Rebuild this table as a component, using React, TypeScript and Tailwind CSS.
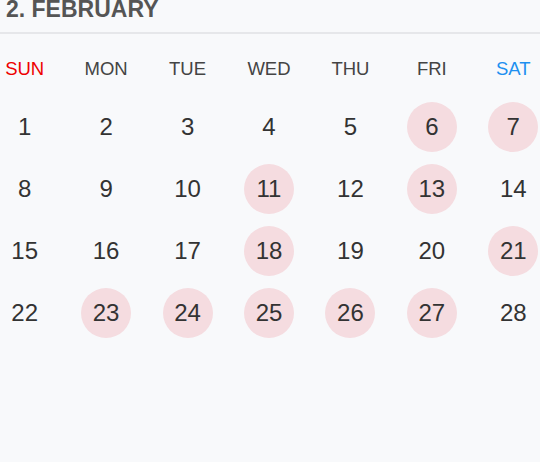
const highlighted = new Set([6, 7, 11, 13, 18, 21, 23, 24, 25, 26, 27]);
const weekdays = ['SUN', 'MON', 'TUE', 'WED', 'THU', 'FRI', 'SAT'];

export default function App() {
  const days = Array.from({ length: 28 }, (_, i) => i + 1);

  return (
    <div
      className="w-[540px] h-[462px] bg-[#f8f9fb] overflow-hidden"
      style={{ fontFamily: '"Liberation Sans", Arial, sans-serif' }}
    >
      <header className="h-[34px] border-b-2 border-[#e6e7ea] px-[6px]">
        <h1 className="text-[23px] leading-[18px] font-bold text-[#555555]">2. FEBRUARY</h1>
      </header>

      <div className="w-[570px] -ml-[16px] grid grid-cols-7">
        {weekdays.map((d, i) => (
          <div
            key={d}
            className={`h-[62px] pt-[7px] flex items-center justify-center text-[18.5px] ${
              i === 0 ? 'text-[#ee0000]' : i === 6 ? 'text-[#1e90f0]' : 'text-[#444444]'
            }`}
          >
            {d}
          </div>
        ))}
        {days.map((n) => (
          <div key={n} className="h-[62px] flex items-center justify-center">
            <span
              className={`w-[50px] h-[50px] rounded-full flex items-center justify-center text-[24px] text-[#333333] ${
                highlighted.has(n) ? 'bg-[#f5dce0]' : ''
              }`}
            >
              {n}
            </span>
          </div>
        ))}
      </div>
    </div>
  );
}
